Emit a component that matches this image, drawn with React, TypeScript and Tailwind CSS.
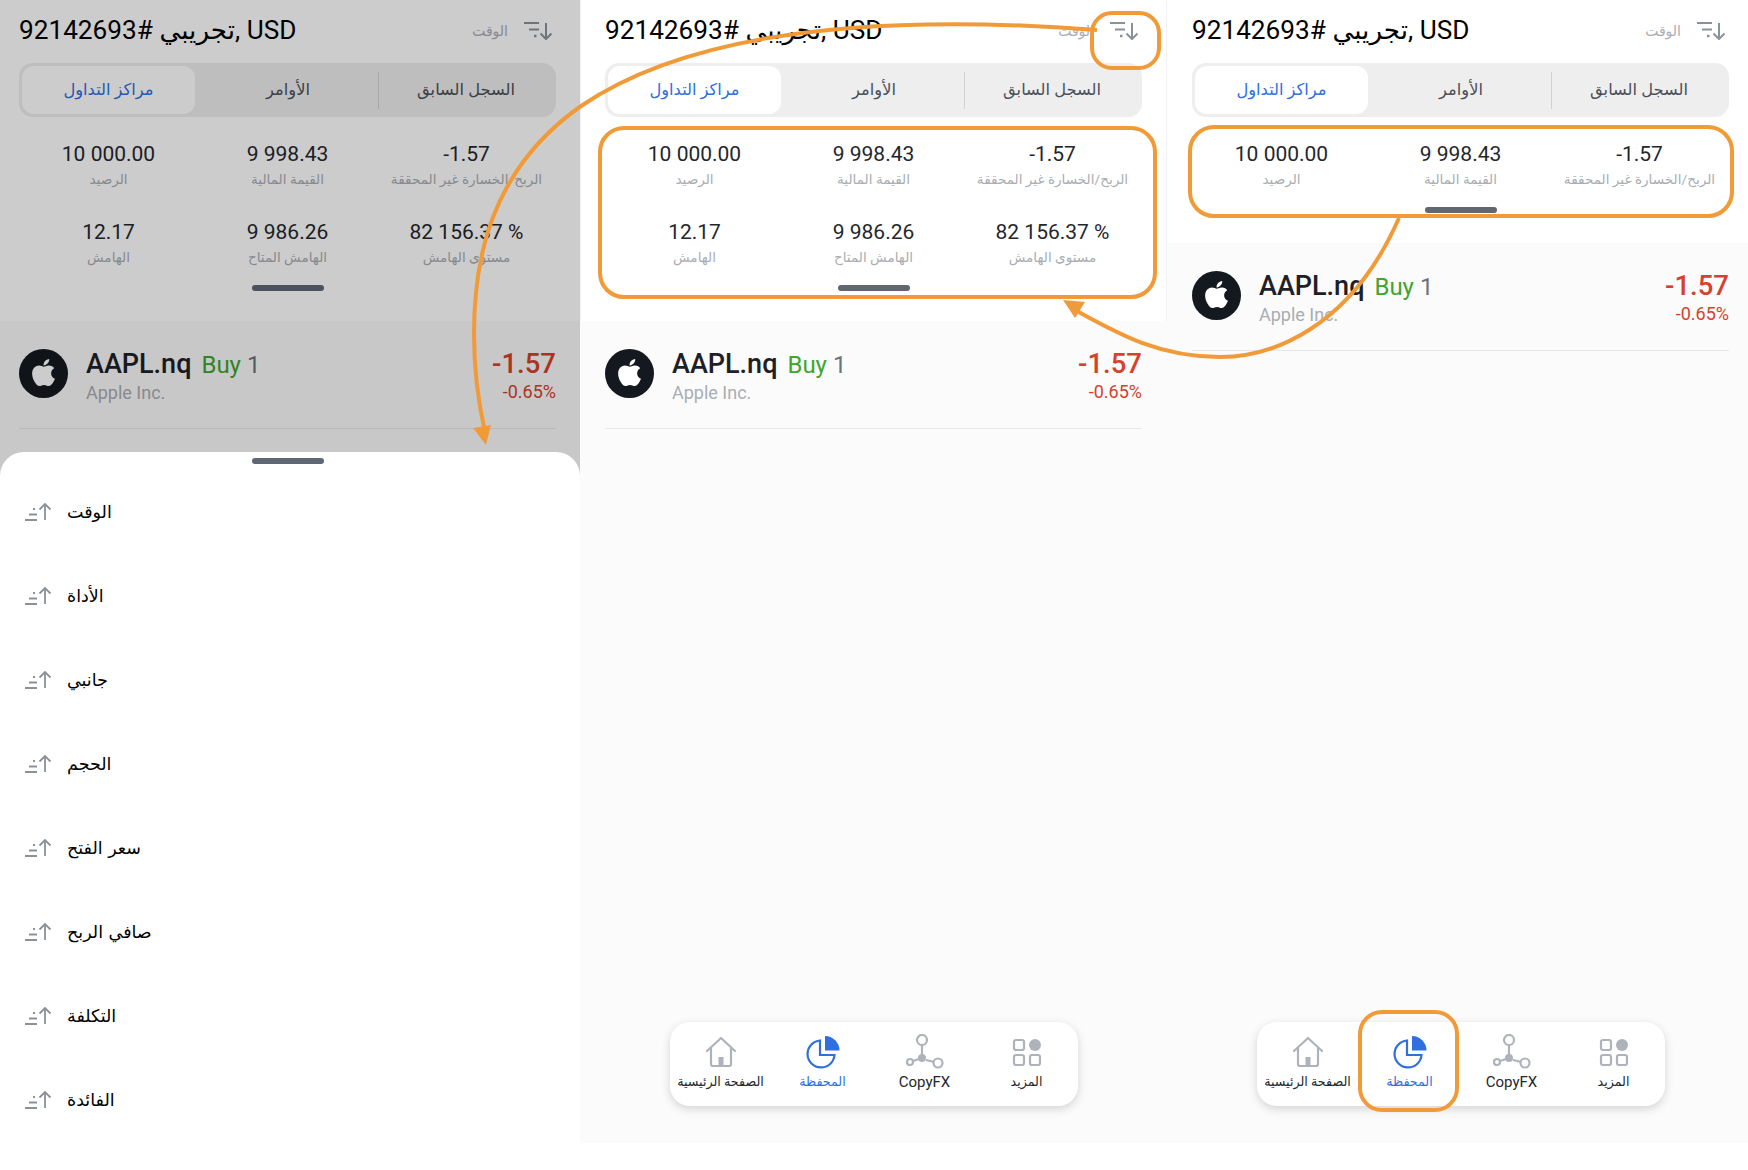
import { FaApple } from "react-icons/fa"

const SORT_FIELDS = ["الوقت", "الأداة", "جانبي", "الحجم", "سعر الفتح", "صافي الربح", "التكلفة", "الفائدة"]

const ROW_ONE = [
  { value: "10 000.00", label: "الرصيد" },
  { value: "9 998.43", label: "القيمة المالية" },
  { value: "-1.57", label: "الربح/الخسارة غير المحققة" },
]
const ROW_TWO = [
  { value: "12.17", label: "الهامش" },
  { value: "9 986.26", label: "الهامش المتاح" },
  { value: "82 156.37 %", label: "مستوى الهامش" },
]

function SortDownIcon() {
  return (
    <svg width="30" height="22" viewBox="0 0 30 22" fill="none" stroke="#8b919b" strokeWidth="2">
      <path d="M1 3h15M6 9.500h10" />
      <path d="M11 16h3" strokeWidth="2.500" strokeDasharray="2.500 2" />
      <path d="M23 3v16M17.500 13.500 23 19l5.500-5.500" strokeLinejoin="round" />
    </svg>
  )
}

function SortUpIcon() {
  return (
    <svg width="28" height="20" viewBox="0 0 28 20" fill="none" stroke="#8b919b" strokeWidth="1.800">
      <path d="M1 18h12M5 12.500h8" />
      <path d="M9 7h3" strokeDasharray="2 1.500" />
      <path d="M21 18V2M15.500 7.500 21 2l5.500 5.500" />
    </svg>
  )
}

function HomeIcon() {
  return (
    <svg width="32" height="32" viewBox="0 0 32 32" fill="none" stroke="#aeb3bb" strokeWidth="2.200">
      <path d="M2 15 16 2l14 13" strokeLinecap="round" strokeLinejoin="round" />
      <path d="M6 12v16a2 2 0 0 0 2 2h16a2 2 0 0 0 2-2V12" />
      <rect x="13.500" y="21" width="5" height="9" fill="#aeb3bb" stroke="none" />
    </svg>
  )
}

function PieIcon() {
  return (
    <svg width="34" height="34" viewBox="0 0 34 34" fill="none">
      <path d="M14 5.500a13.500 13.500 0 1 0 14.500 14.500H14V5.500Z" stroke="#2f6fdf" strokeWidth="2.200" />
      <path d="M19 1a14.500 14.500 0 0 1 14.500 14.500H19V1Z" fill="#2f6fdf" />
    </svg>
  )
}

function NetworkIcon() {
  return (
    <svg width="38" height="36" viewBox="0 0 38 36" fill="none" stroke="#aeb3bb" strokeWidth="2.200">
      <circle cx="16" cy="6" r="5" />
      <circle cx="32" cy="29" r="4.500" />
      <circle cx="4" cy="28" r="3" />
      <path d="M16 11v12M7 27l6-2M20 26l8 2" />
      <circle cx="16" cy="24" r="4" fill="#aeb3bb" stroke="none" />
    </svg>
  )
}

function GridIcon() {
  return (
    <svg width="30" height="30" viewBox="0 0 30 30" fill="none" stroke="#aeb3bb" strokeWidth="2.200">
      <rect x="2" y="3" width="10" height="10" rx="2" />
      <rect x="2" y="18" width="10" height="10" rx="2" />
      <rect x="18" y="18" width="10" height="10" rx="2" />
      <circle cx="23" cy="8" r="6" fill="#aeb3bb" stroke="none" />
    </svg>
  )
}

function Stat({ value, label }: { value: string; label: string }) {
  return (
    <div className="flex flex-col items-center">
      <div className="text-[21px] leading-[26px] text-[#23272d]">{value}</div>
      <div className="mt-[2px] mb-[1px] text-[13.6px] leading-[20px] text-[#a9adb4] whitespace-nowrap">{label}</div>
    </div>
  )
}

function Nav() {
  return (
    <div className="mx-auto mb-[37px] grid h-[84px] w-[408px] grid-cols-4 rounded-[20px] bg-white shadow-[0_3px_10px_rgba(0,0,0,0.16)]">
      {[
        { icon: <HomeIcon />, label: "الصفحة الرئيسية", color: "text-[12.7px] text-[#23272d]" },
        { icon: <PieIcon />, label: "المحفظة", color: "text-[12.7px] text-[#2f6fdf]" },
        { icon: <NetworkIcon />, label: "CopyFX", color: "text-[15px] text-[#23272d]" },
        { icon: <GridIcon />, label: "المزيد", color: "text-[12.7px] text-[#23272d]" },
      ].map((item) => (
        <div key={item.label} className="flex flex-col items-center pt-[12px]">
          <div className="flex h-[36px] items-center">{item.icon}</div>
          <div className={`mt-[2px] leading-[20px] whitespace-nowrap ${item.color}`}>{item.label}</div>
        </div>
      ))}
    </div>
  )
}

function Panel({ width, pl, compact }: { width: string; pl: string; compact?: boolean }) {
  return (
    <div className={`flex h-full shrink-0 flex-col ${width}`}>
      <div className={`${pl} w-full`}>
        <div className="w-[537px]">
          {/* Header */}
          <div className="flex h-[63px] items-center justify-between pr-[3px] pb-[1px]">
            <h1 className="text-[26.2px] font-normal text-black whitespace-nowrap">92142693# تجريبي, USD</h1>
            <div className="flex items-center gap-[15px] text-[#a9adb4]">
              <span className="text-[14px]">الوقت</span>
              <SortDownIcon />
            </div>
          </div>

          {/* Tabs */}
          <div className="grid h-[54px] grid-cols-[173px_183px_1fr] items-center rounded-[14px] bg-[#eeeeee] p-[3px] text-[16.300px]">
            <div className="flex h-full items-center justify-center rounded-[12px] bg-white pt-[1px] text-[#2f6fdf]">مراكز التداول</div>
            <div className="flex h-[37px] items-center justify-center pt-[1px] pl-[3px] text-[#4b5058]">الأوامر</div>
            <div className="flex h-[37px] items-center justify-center border-l border-[#cfd1d4] pt-[1px] text-[#4b5058]">السجل السابق</div>
          </div>

          {/* Account stats */}
          <div className="mt-[24px] grid grid-cols-3 gap-y-[29px]">
            {(compact ? ROW_ONE : [...ROW_ONE, ...ROW_TWO]).map((s) => (
              <Stat key={s.label} value={s.value} label={s.label} />
            ))}
          </div>
          <div className="mx-auto mt-[17px] mb-[30px] h-[6px] w-[72px] rounded-full bg-[#5f6772]" />
        </div>
      </div>

      {/* Positions */}
      <div className={`flex flex-1 flex-col bg-[#fbfbfb] ${pl}`}>
        <div className="flex h-[108px] w-[537px] items-center border-b border-[#e5e7eb] pb-[2px]">
          <div className="flex h-[49px] w-[49px] items-center justify-center rounded-full bg-[#14181f]">
            <FaApple className="mb-[2px] text-[31px] text-white" />
          </div>
          <div className="mt-[5px] ml-[18px] flex-1">
            <div className="flex items-baseline gap-[10px] leading-[32px]">
              <span className="text-[27px] font-medium text-[#1d2127]">AAPL.nq</span>
              <span className="text-[24px]">
                <span className="text-[#3fa52b]">Buy</span> <span className="text-[#6b7280]">1</span>
              </span>
            </div>
            <div className="text-[18px] leading-[24px] text-[#a9adb4]">Apple Inc.</div>
          </div>
          <div className="mt-[5px] text-right">
            <div className="text-[27.5px] leading-[32px] font-medium text-[#d5412b]">-1.57</div>
            <div className="text-[18px] leading-[24px] text-[#d5412b]">-0.65%</div>
          </div>
        </div>
        <div className="mt-auto w-[537px]">
          <Nav />
        </div>
      </div>
      <div className="h-[27px] shrink-0 bg-white" />
    </div>
  )
}

function SortSheet() {
  return (
    <div className="absolute inset-x-0 bottom-0 h-[718px] rounded-t-[24px] bg-white pl-[24px]">
      <div className="absolute top-[6px] left-[252px] h-[6px] w-[72px] rounded-full bg-[#5f6772]" />
      <div className="pt-[18px]">
        {SORT_FIELDS.map((field) => (
          <div key={field} className="flex h-[84px] items-center gap-[15px] font-['DejaVu_Sans',sans-serif] text-[17.500px] text-black">
            <SortUpIcon />
            <span>{field}</span>
          </div>
        ))}
      </div>
    </div>
  )
}

// annotation layer drawn over the three phones
function Annotations() {
  const orange = "#f19a38"
  return (
    <svg className="pointer-events-none absolute inset-0" width="1748" height="1170" fill="none" stroke={orange} strokeWidth="4">
      <rect x="1092" y="13" width="67" height="55" rx="20" />
      <rect x="600" y="128" width="555" height="169" rx="24" />
      <rect x="1190" y="127" width="542" height="89" rx="24" />
      <rect x="1360" y="1012" width="97" height="98" rx="22" />
      <path d="M1097 30C900 15 700 25 581 106 490 170 474 260 474 334 474 375 480 410 485 432" />
      <path d="M1399 218C1350 330 1270 357 1220 357 1160 357 1120 335 1075 310" />
      <path d="M473 428 491 425 486 445Z" fill={orange} stroke="none" />
      <path d="M1063 300 1085 302 1075 318Z" fill={orange} stroke="none" />
    </svg>
  )
}

export default function App() {
  return (
    <div className="relative flex h-[1170px] w-[1748px] overflow-hidden bg-white font-['Roboto','Noto_Sans','DejaVu_Sans',sans-serif]">
      <div className="relative h-full w-[581px] shrink-0 border-r border-[#f2f2f2]">
        <Panel width="w-[581px]" pl="pl-[19px]" />
        <div className="absolute inset-0 bg-black/20" />
        <SortSheet />
      </div>
      <div className="h-full w-[586px] shrink-0 border-r border-[#f2f2f2]">
        <Panel width="w-[586px]" pl="pl-[24px]" />
      </div>
      <Panel width="w-[581px]" pl="pl-[25px]" compact />
      <Annotations />
    </div>
  )
}
